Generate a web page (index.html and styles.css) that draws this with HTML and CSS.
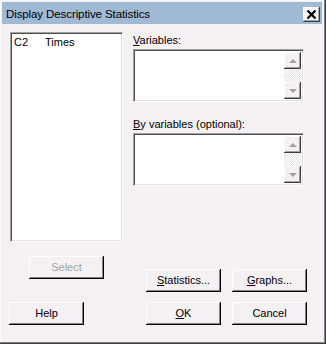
FILE: index.html
```html
<!DOCTYPE html>
<html>
<head>
<meta charset="utf-8">
<link rel="stylesheet" href="styles.css">
</head>
<body>
<div class="window">
  <div class="titlebar">
    <span class="title">Display Descriptive Statistics</span>
    <span class="close"><svg width="11" height="9" viewBox="0 0 11 9"><path d="M1.5 0.5 L9.5 8.5 M9.5 0.5 L1.5 8.5" stroke="#000" stroke-width="2.2" fill="none"/></svg></span>
  </div>
  <div class="main">
    <div class="listbox">
      <div class="item"><span class="col">C2</span><span>Times</span></div>
    </div>
    <div class="right">
      <div class="label"><u>V</u>ariables:</div>
      <div class="field">
        <div class="scroll">
          <div class="sbtn"><span class="up"></span></div>
          <div class="track"></div>
          <div class="sbtn"><span class="down"></span></div>
        </div>
      </div>
      <div class="label second"><u>B</u>y variables (optional):</div>
      <div class="field">
        <div class="scroll">
          <div class="sbtn"><span class="up"></span></div>
          <div class="track"></div>
          <div class="sbtn"><span class="down"></span></div>
        </div>
      </div>
    </div>
  </div>
  <div class="row1">
    <div class="btn disabled select">Select</div>
    <div class="group">
      <div class="btn"><u>S</u>tatistics...</div>
      <div class="btn"><u>G</u>raphs...</div>
    </div>
  </div>
  <div class="row2">
    <div class="btn">Help</div>
    <div class="group">
      <div class="btn"><u>O</u>K</div>
      <div class="btn">Cancel</div>
    </div>
  </div>
</div>
</body>
</html>
```
FILE: styles.css
```css
* { box-sizing: border-box; }
html, body { margin: 0; padding: 0; }
body {
  font-family: "Liberation Sans", Arial, sans-serif;
  font-size: 11px;
  color: #000;
  background: #f4f0f4;
}
.window {
  width: 326px;
  height: 344px;
  background: #f4f0f4;
  box-shadow: inset -1px -1px #404040, inset -2px -2px #808080, inset 1px 1px #fbf9fb;
  padding: 2px 4px 0 2px;
}
.titlebar {
  height: 22px;
  background: #a0b9d5;
  display: flex;
  align-items: center;
  justify-content: space-between;
  padding: 0 2px 0 4px;
}
.title {
  font-size: 11.5px;
  line-height: 14px;
  padding-top: 1px;
  letter-spacing: -0.1px;
}
.close {
  width: 17px;
  height: 15px;
  background: #f7f4f7;
  box-shadow: inset -1px -1px #404040, inset 1px 1px #fff, inset -2px -2px #a0a0a0;
  display: flex;
  align-items: center;
  justify-content: center;
  margin-top: 2px;
}
.close svg { display: block; }
.main {
  display: flex;
  padding: 8px 0 0 8px;
}
.listbox {
  width: 113px;
  height: 210px;
  background: #fff;
  border: 1px solid;
  border-color: #a0a0a0 #fff #fff #a0a0a0;
  box-shadow: inset 1px 1px #505050, inset -1px -1px #e4e0e4;
  padding: 3px 0 0 3px;
}
.item { display: flex; line-height: 13px; }
.item .col { width: 31px; }
.right {
  margin-left: 10px;
  width: 171px;
  display: flex;
  flex-direction: column;
}
.label {
  line-height: 13px;
  height: 13px;
  margin-top: 2px;
  margin-bottom: 2px;
}
.label.second { margin-top: 16px; margin-bottom: 2px; }
.field {
  height: 53px;
  background: #fff;
  border: 1px solid;
  border-color: #a0a0a0 #fff #fff #a0a0a0;
  box-shadow: inset 1px 1px #505050, inset -1px -1px #e4e0e4;
  display: flex;
  justify-content: flex-end;
  padding: 2px 2px 2px 2px;
}
.scroll {
  width: 17px;
  display: flex;
  flex-direction: column;
}
.sbtn {
  height: 17px;
  background: #f4f0f4;
  box-shadow: inset -1px -1px #404040, inset 1px 1px #fff, inset -2px -2px #a0a0a0;
  display: flex;
  align-items: center;
  justify-content: center;
}
.track {
  flex: 1;
  background: repeating-conic-gradient(#fff 0 25%, #e8e4e8 0 50%) 0 0 / 2px 2px;
}
.up {
  width: 0; height: 0;
  border-left: 4px solid transparent;
  border-right: 4px solid transparent;
  border-bottom: 4px solid #a0a0a0;
}
.down {
  width: 0; height: 0;
  border-left: 4px solid transparent;
  border-right: 4px solid transparent;
  border-top: 4px solid #a0a0a0;
}
.btn {
  width: 75px;
  height: 23px;
  background: #f4f0f4;
  box-shadow: inset -1px -1px #000, inset 1px 1px #fff, inset -2px -2px #808080;
  display: flex;
  align-items: center;
  justify-content: center;
  padding-bottom: 1px;
}
.btn.disabled { color: #a0a0a0; }
.row1 {
  display: flex;
  align-items: flex-start;
  padding-top: 14px;
  height: 60px;
}
.select { margin-left: 27px; }
.group {
  display: flex;
  gap: 11px;
  margin-left: auto;
  margin-right: 15px;
}
.row1 .group { margin-top: 13px; }
.row2 {
  display: flex;
  padding-left: 7px;
}
```
